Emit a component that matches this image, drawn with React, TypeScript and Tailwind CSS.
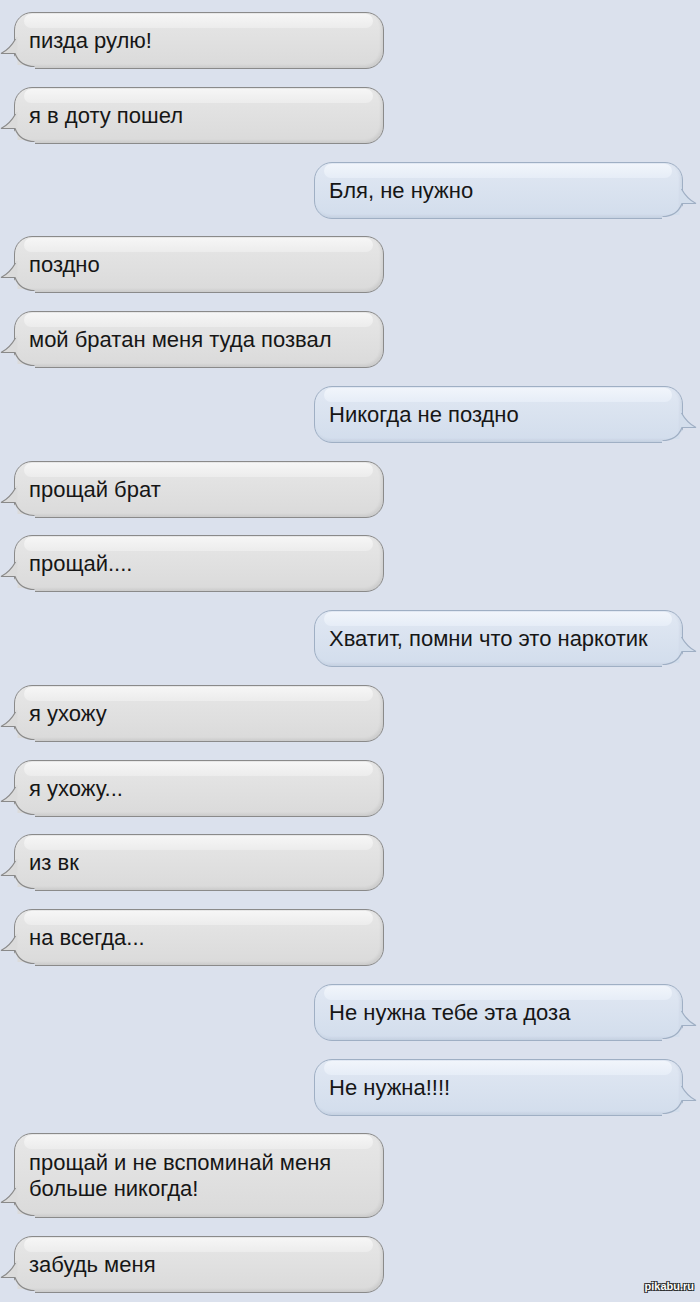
type Side = "in" | "out";

interface IMessage {
  side: Side;
  text: string[];
}

const messages: IMessage[] = [
  { side: "in", text: ["пизда рулю!"] },
  { side: "in", text: ["я в доту пошел"] },
  { side: "out", text: ["Бля, не нужно"] },
  { side: "in", text: ["поздно"] },
  { side: "in", text: ["мой братан меня туда позвал"] },
  { side: "out", text: ["Никогда не поздно"] },
  { side: "in", text: ["прощай брат"] },
  { side: "in", text: ["прощай...."] },
  { side: "out", text: ["Хватит, помни что это наркотик"] },
  { side: "in", text: ["я ухожу"] },
  { side: "in", text: ["я ухожу..."] },
  { side: "in", text: ["из вк"] },
  { side: "in", text: ["на всегда..."] },
  { side: "out", text: ["Не нужна тебе эта доза"] },
  { side: "out", text: ["Не нужна!!!!"] },
  { side: "in", text: ["прощай и не вспоминай меня", "больше никогда!"] },
  { side: "in", text: ["забудь меня"] },
];

const PAGE_BG = "#dbe1ed";

// bubble tail, drawn over the bottom corner of the bubble
const Tail = ({ side }: { side: Side }) => {
  const fill = side === "in" ? "#dbdbdb" : "#d3deec";
  const stroke = side === "in" ? "#8a8a8a" : "#9fafc4";
  return (
    <svg
      width="40"
      height="32"
      viewBox="0 0 40 32"
      className={
        side === "in"
          ? "absolute left-[-15px] bottom-[-1px]"
          : "absolute right-[-15px] bottom-[-1px] -scale-x-100"
      }
    >
      <path d="M13 16.5 Q20 29.5 35 29.5 L35 32 L13 32 Z" fill={PAGE_BG} />
      <path
        d="M17.5 -1 L15.5 -1 L15.5 2 Q10 12 1 16.5 L15 16.5 Q20 29.5 34 29.5 L34 28 L17.5 28 Z"
        fill={fill}
      />
      <path
        d="M15.5 2 Q10 12 1 16.5 L15 16.5 Q20 29.5 34.5 29.5"
        fill="none"
        stroke={stroke}
        strokeWidth="1.2"
      />
    </svg>
  );
};

const Bubble = ({ side, text }: IMessage) => (
  <div
    className={
      side === "in"
        ? "relative w-[370px] ml-[14px] rounded-[18px] rounded-bl-none border border-[#8a8a8a] bg-gradient-to-b from-[#e7e7e7] to-[#dadada] shadow-[inset_-2px_-2px_3px_rgba(0,0,0,0.07)]"
        : "relative w-[369px] ml-[314px] rounded-[18px] rounded-br-none border border-[#9fafc4] bg-gradient-to-b from-[#e1e8f3] to-[#d2ddec] shadow-[inset_-2px_-2px_3px_rgba(40,60,100,0.08)]"
    }
  >
    <div
      className={
        side === "in"
          ? "absolute top-[1px] left-[9px] right-[10px] h-[14px] rounded-[8px] bg-gradient-to-b from-[#f6f6f6] to-[#ececec]"
          : "absolute top-[1px] left-[9px] right-[10px] h-[14px] rounded-[8px] bg-gradient-to-b from-[#f1f5fb] to-[#e6edf7]"
      }
    />
    <Tail side={side} />
    <div
      className={
        text.length > 1
          ? "relative z-10 pl-[14px] pt-[16px] pb-[15px] text-[22px] leading-[26px] text-[#161616]"
          : "relative z-10 pl-[14px] pt-[15px] pb-[14px] text-[22px] leading-[26px] text-[#161616]"
      }
    >
      {text.map((line) => (
        <div key={line}>{line}</div>
      ))}
    </div>
  </div>
);

const App = () => (
  <div
    className="relative h-[1302px] w-[700px] overflow-hidden bg-[#dbe1ed] pt-[12px]"
    style={{ fontFamily: '"Liberation Sans", Arial, sans-serif' }}
  >
    <div className="flex flex-col gap-[17.75px]">
      {messages.map((m, i) => (
        <Bubble key={i} side={m.side} text={m.text} />
      ))}
    </div>
    <div className="absolute right-[6px] bottom-[8px] text-[11px] font-bold text-white [text-shadow:0_0_1px_#222,1px_1px_0_#333,-1px_-1px_0_#333,1px_-1px_0_#333,-1px_1px_0_#333]">
      pikabu.ru
    </div>
  </div>
);

export default App;
